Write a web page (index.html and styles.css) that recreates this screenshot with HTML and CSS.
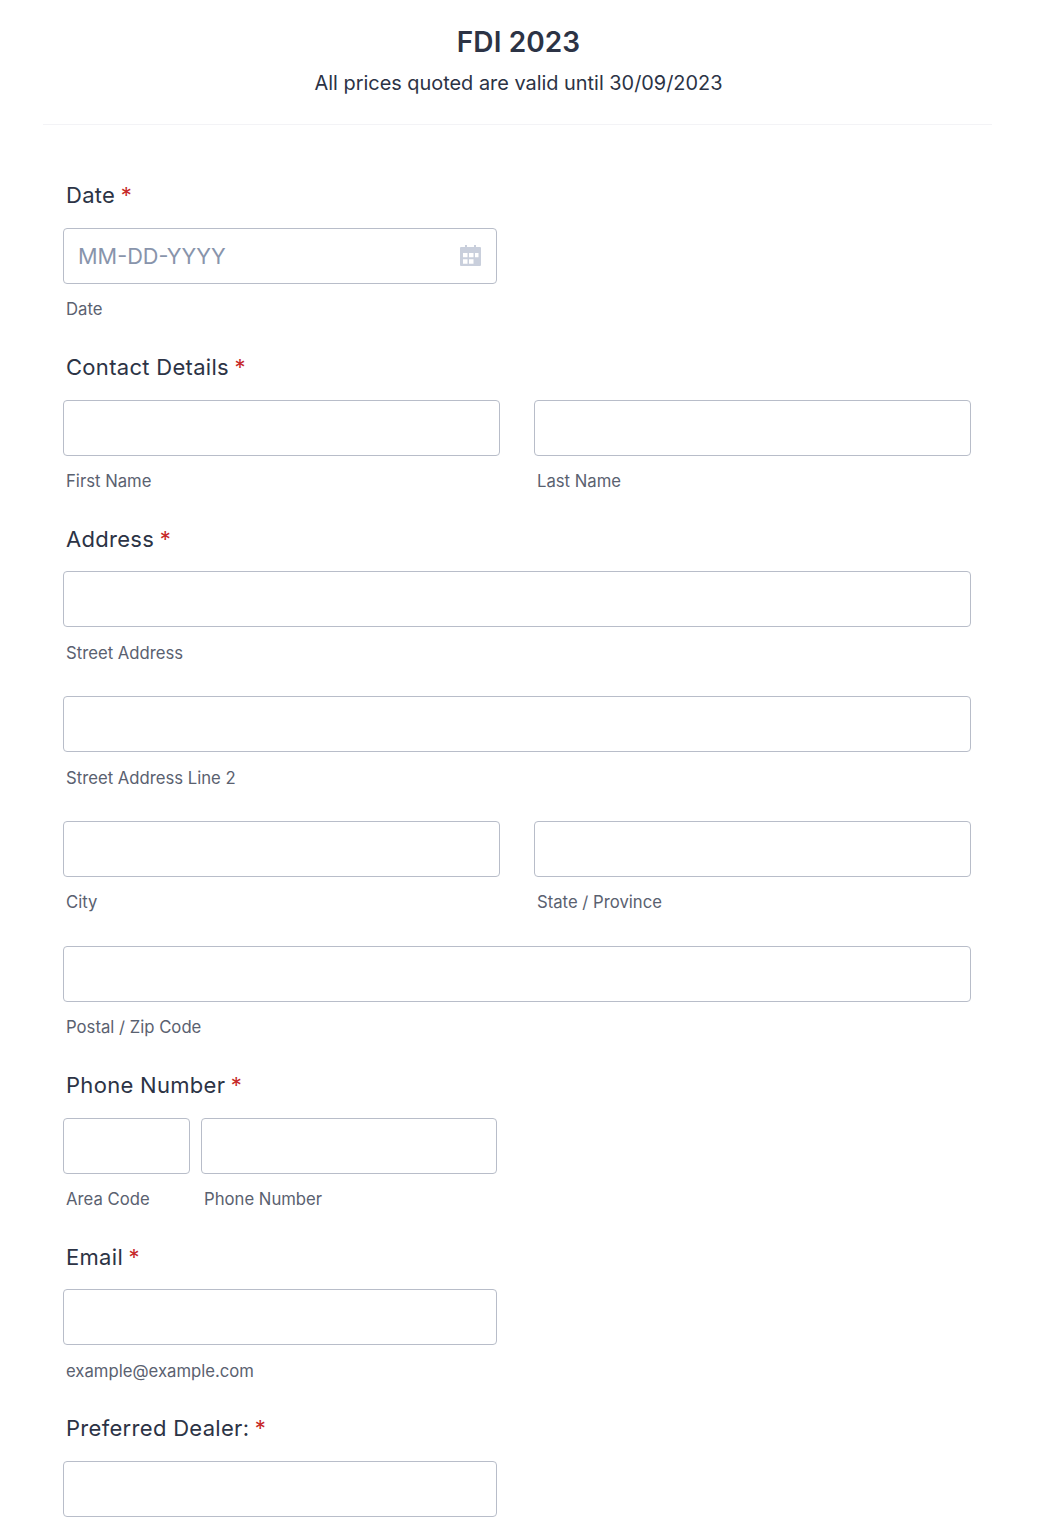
FILE: index.html
```html
<!DOCTYPE html>
<html lang="en">
<head>
<meta charset="utf-8">
<title>FDI 2023</title>
<link rel="stylesheet" href="styles.css">
</head>
<body>
<form class="form">
  <header class="header">
    <h1 class="title">FDI 2023</h1>
    <p class="subtitle">All prices quoted are valid until 30/09/2023</p>
  </header>
  <div class="fields">
    <section class="field first">
      <div class="label">Date <span class="req">*</span></div>
      <div class="row narrow">
        <div class="cell">
          <div class="input date"><span class="placeholder">MM-DD-YYYY</span>
            <svg class="cal" width="21" height="21" viewBox="0 0 21 21" aria-hidden="true"><path fill="#c9cfdc" fill-rule="evenodd" d="M1 2h4V0h2v2h7V0h2v2h4a1 1 0 0 1 1 1v17a1 1 0 0 1-1 1H1a1 1 0 0 1-1-1V3a1 1 0 0 1 1-1zm2 6v4.300h4.500V8zm6 0v4.300h4.500V8zm6 0v4.300h3.500V8zM3 14.300v4.500h4.500v-4.500zm6 0v4.500h4.500v-4.500z"/></svg>
          </div>
          <div class="sub">Date</div>
        </div>
      </div>
    </section>
    <section class="field">
      <div class="label">Contact Details <span class="req">*</span></div>
      <div class="row halves">
        <div class="cell"><div class="input"></div><div class="sub">First Name</div></div>
        <div class="cell"><div class="input"></div><div class="sub">Last Name</div></div>
      </div>
    </section>
    <section class="field">
      <div class="label">Address <span class="req">*</span></div>
      <div class="cell"><div class="input"></div><div class="sub">Street Address</div></div>
      <div class="cell line"><div class="input"></div><div class="sub">Street Address Line 2</div></div>
      <div class="row halves line">
        <div class="cell"><div class="input"></div><div class="sub">City</div></div>
        <div class="cell"><div class="input"></div><div class="sub">State / Province</div></div>
      </div>
      <div class="cell line"><div class="input"></div><div class="sub">Postal / Zip Code</div></div>
    </section>
    <section class="field">
      <div class="label">Phone Number <span class="req">*</span></div>
      <div class="row phone">
        <div class="cell"><div class="input"></div><div class="sub">Area Code</div></div>
        <div class="cell"><div class="input"></div><div class="sub">Phone Number</div></div>
      </div>
    </section>
    <section class="field">
      <div class="label">Email <span class="req">*</span></div>
      <div class="row narrow">
        <div class="cell"><div class="input"></div><div class="sub">example@example.com</div></div>
      </div>
    </section>
    <section class="field">
      <div class="label">Preferred Dealer: <span class="req">*</span></div>
      <div class="row narrow">
        <div class="cell"><div class="input"></div></div>
      </div>
    </section>
  </div>
</form>
</body>
</html>
```
FILE: styles.css
```css
* { box-sizing: border-box; }
html, body { margin: 0; padding: 0; background: #fff; }
body { font-family: Inter, "Liberation Sans", sans-serif; color: #2c3345; height: 1526px; overflow: hidden; }
.form { padding: 0 52px 0 43px; }
.header { text-align: center; padding: 24px 0 24px 2px; border-bottom: 1px solid #f3f3f6; height: 125px; }
.title { margin: 0; font-size: 28px; font-weight: 600; line-height: 36px; letter-spacing: 0.1px; }
.subtitle { margin: 7px 0 0; font-size: 19.9px; font-weight: 400; line-height: 32px; }
.fields { padding: 54px 21px 0 20px; }
.field { margin-bottom: 30.4px; }
.label { padding: 0.3px 0 0 3px; font-size: 22px; font-weight: 400; letter-spacing: 0.3px; line-height: 32px; height: 49px; }
.req { color: #c62828; margin-left: -1px; }
.row { display: flex; }
.narrow { width: 434px; }
.narrow .cell { flex: 1; }
.halves { gap: 34px; }
.halves .cell { flex: 1; }
.phone { width: 434px; gap: 11px; }
.phone .cell:first-child { width: 127px; flex: none; }
.phone .cell:last-child { flex: 1; }
.line { margin-top: 32.55px; }
.input { height: 56px; border: 1px solid #b8bdc9; border-radius: 4px; background: #fff; }
.date { display: flex; align-items: center; justify-content: space-between; padding: 0 15px 0 14px; }
.placeholder { font-size: 21.7px; color: #8894ab; }
.cal { display: block; margin-bottom: 1px; }
.sub { padding-left: 3px; margin-top: 14.3px; font-size: 16.7px; line-height: 22px; color: #5a6170; height: 22px; }
```
